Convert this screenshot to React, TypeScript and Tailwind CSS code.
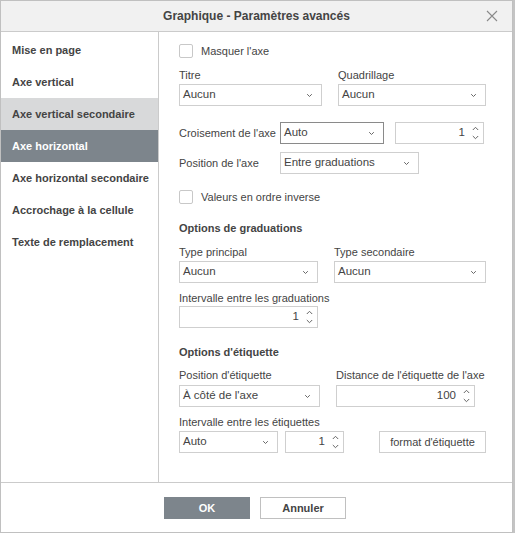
import React from "react";

const font = { fontFamily: '"Liberation Sans", Arial, sans-serif' };

function Chevron() {
  return (
    <svg width="7" height="5" viewBox="0 0 7 5" className="shrink-0">
      <path d="M1.2 1.2 L3.5 3.5 L5.8 1.2" fill="none" stroke="#666" strokeWidth="1" />
    </svg>
  );
}

function Spinner() {
  return (
    <div className="flex flex-col items-center gap-[4px] shrink-0">
      <svg width="7" height="5" viewBox="0 0 7 5">
        <path d="M0.8 4 L3.5 1.3 L6.2 4" fill="none" stroke="#666" strokeWidth="1" />
      </svg>
      <svg width="7" height="5" viewBox="0 0 7 5">
        <path d="M0.8 1 L3.5 3.7 L6.2 1" fill="none" stroke="#666" strokeWidth="1" />
      </svg>
    </div>
  );
}

function Select({ w, value, dark }: { w: string; value: string; dark?: boolean }) {
  return (
    <div
      className={`${w} h-[22px] bg-white border ${dark ? "border-[#8a8a8a]" : "border-[#cfcfcf]"} flex items-center justify-between pl-[3px] pr-[8px] text-[11.5px] text-[#444]`}
    >
      <span>{value}</span>
      <Chevron />
    </div>
  );
}

function NumInput({ w, value }: { w: string; value: string }) {
  return (
    <div className={`${w} h-[22px] bg-white border border-[#cfcfcf] flex items-center justify-end pr-[4px] gap-[7px] text-[11.5px] text-[#444]`}>
      <span>{value}</span>
      <Spinner />
    </div>
  );
}

function Check({ label }: { label: string }) {
  return (
    <div className="flex items-center h-[14px]">
      <div className="w-[14px] h-[14px] border border-[#c8c8c8] rounded-[2px] bg-white" />
      <span className="ml-[8px] text-[11px] text-[#444]">{label}</span>
    </div>
  );
}

function Label({ children, bold }: { children: React.ReactNode; bold?: boolean }) {
  return (
    <div className={`h-[14px] leading-[14px] text-[11px] text-[#444] ${bold ? "font-bold" : ""}`}>{children}</div>
  );
}

const items = [
  "Mise en page",
  "Axe vertical",
  "Axe vertical secondaire",
  "Axe horizontal",
  "Axe horizontal secondaire",
  "Accrochage à la cellule",
  "Texte de remplacement",
];

export default function App() {
  return (
    <div className="w-[515px] h-[533px] bg-[#c4c4c4] flex" style={font}>
      <div className="w-[513px] h-[533px] bg-white border border-[#c0c0c0] flex flex-col">
        <div className="h-[31px] shrink-0 bg-[#f1f1f1] border-b border-[#cbcbcb] flex items-center justify-center relative">
          <span className="text-[12px] font-bold text-[#444]">Graphique - Paramètres avancés</span>
          <svg width="12" height="12" viewBox="0 0 12 12" className="absolute right-[14px] top-[9px]">
            <path d="M1 1 L11 11 M11 1 L1 11" stroke="#8a8a8a" strokeWidth="1.1" />
          </svg>
        </div>
        <div className="flex flex-1 min-h-0">
          <div className="w-[158px] shrink-0 border-r border-[#cbcbcb] pt-[2px]">
            {items.map((it, i) => (
              <div
                key={it}
                className={`h-[32px] flex items-center pl-[11px] text-[11px] font-bold ${
                  i === 3
                    ? "bg-[#7d858c] text-white"
                    : i === 2
                    ? "bg-[#d8d9da] text-[#444]"
                    : "text-[#444]"
                }`}
              >
                {it}
              </div>
            ))}
          </div>
          <div className="flex-1 pl-[20px] pt-[12px] flex flex-col">
            <Check label="Masquer l'axe" />
            <div className="mt-[10px] flex gap-[16px]">
              <div className="flex flex-col gap-[2px]">
                <Label>Titre</Label>
                <Select w="w-[143px]" value="Aucun" />
              </div>
              <div className="flex flex-col gap-[2px]">
                <Label>Quadrillage</Label>
                <Select w="w-[148px]" value="Aucun" />
              </div>
            </div>
            <div className="mt-[16px] flex items-center">
              <div className="w-[101px] text-[11px] text-[#444]">Croisement de l'axe</div>
              <Select w="w-[104px]" value="Auto" dark />
              <div className="ml-[11px]">
                <NumInput w="w-[89px]" value="1" />
              </div>
            </div>
            <div className="mt-[8px] flex items-center">
              <div className="w-[101px] text-[11px] text-[#444]">Position de l'axe</div>
              <Select w="w-[139px]" value="Entre graduations" />
            </div>
            <div className="mt-[16px]">
              <Check label="Valeurs en ordre inverse" />
            </div>
            <div className="mt-[17px]">
              <Label bold>Options de graduations</Label>
            </div>
            <div className="mt-[10px] flex gap-[16px]">
              <div className="flex flex-col gap-[2px]">
                <Label>Type principal</Label>
                <Select w="w-[139px]" value="Aucun" />
              </div>
              <div className="flex flex-col gap-[2px]">
                <Label>Type secondaire</Label>
                <Select w="w-[152px]" value="Aucun" />
              </div>
            </div>
            <div className="mt-[8px] flex flex-col gap-[1px]">
              <Label>Intervalle entre les graduations</Label>
              <NumInput w="w-[139px]" value="1" />
            </div>
            <div className="mt-[17px]">
              <Label bold>Options d'étiquette</Label>
            </div>
            <div className="mt-[9px] flex gap-[16px]">
              <div className="flex flex-col gap-[3px]">
                <Label>Position d'étiquette</Label>
                <Select w="w-[141px]" value="À côté de l'axe" />
              </div>
              <div className="flex flex-col gap-[3px]">
                <Label>Distance de l'étiquette de l'axe</Label>
                <NumInput w="w-[139px]" value="100" />
              </div>
            </div>
            <div className="mt-[8px] flex flex-col gap-[2px]">
              <Label>Intervalle entre les étiquettes</Label>
              <div className="flex items-center">
                <Select w="w-[99px]" value="Auto" />
                <div className="ml-[7px]">
                  <NumInput w="w-[59px]" value="1" />
                </div>
                <div className="ml-[35px] w-[107px] h-[22px] border border-[#cfcfcf] bg-white flex items-center justify-center text-[11px] text-[#444]">
                  format d'étiquette
                </div>
              </div>
            </div>
          </div>
        </div>
        <div className="h-[50px] shrink-0 border-t border-[#cbcbcb] flex items-start justify-center pt-[14px] pr-[3px] gap-[10px]">
          <div className="w-[86px] h-[22px] bg-[#7d858c] text-white text-[11px] font-bold flex items-center justify-center">OK</div>
          <div className="w-[86px] h-[22px] bg-white border border-[#c0c0c0] text-[#444] text-[11px] font-bold flex items-center justify-center">Annuler</div>
        </div>
      </div>
    </div>
  );
}
